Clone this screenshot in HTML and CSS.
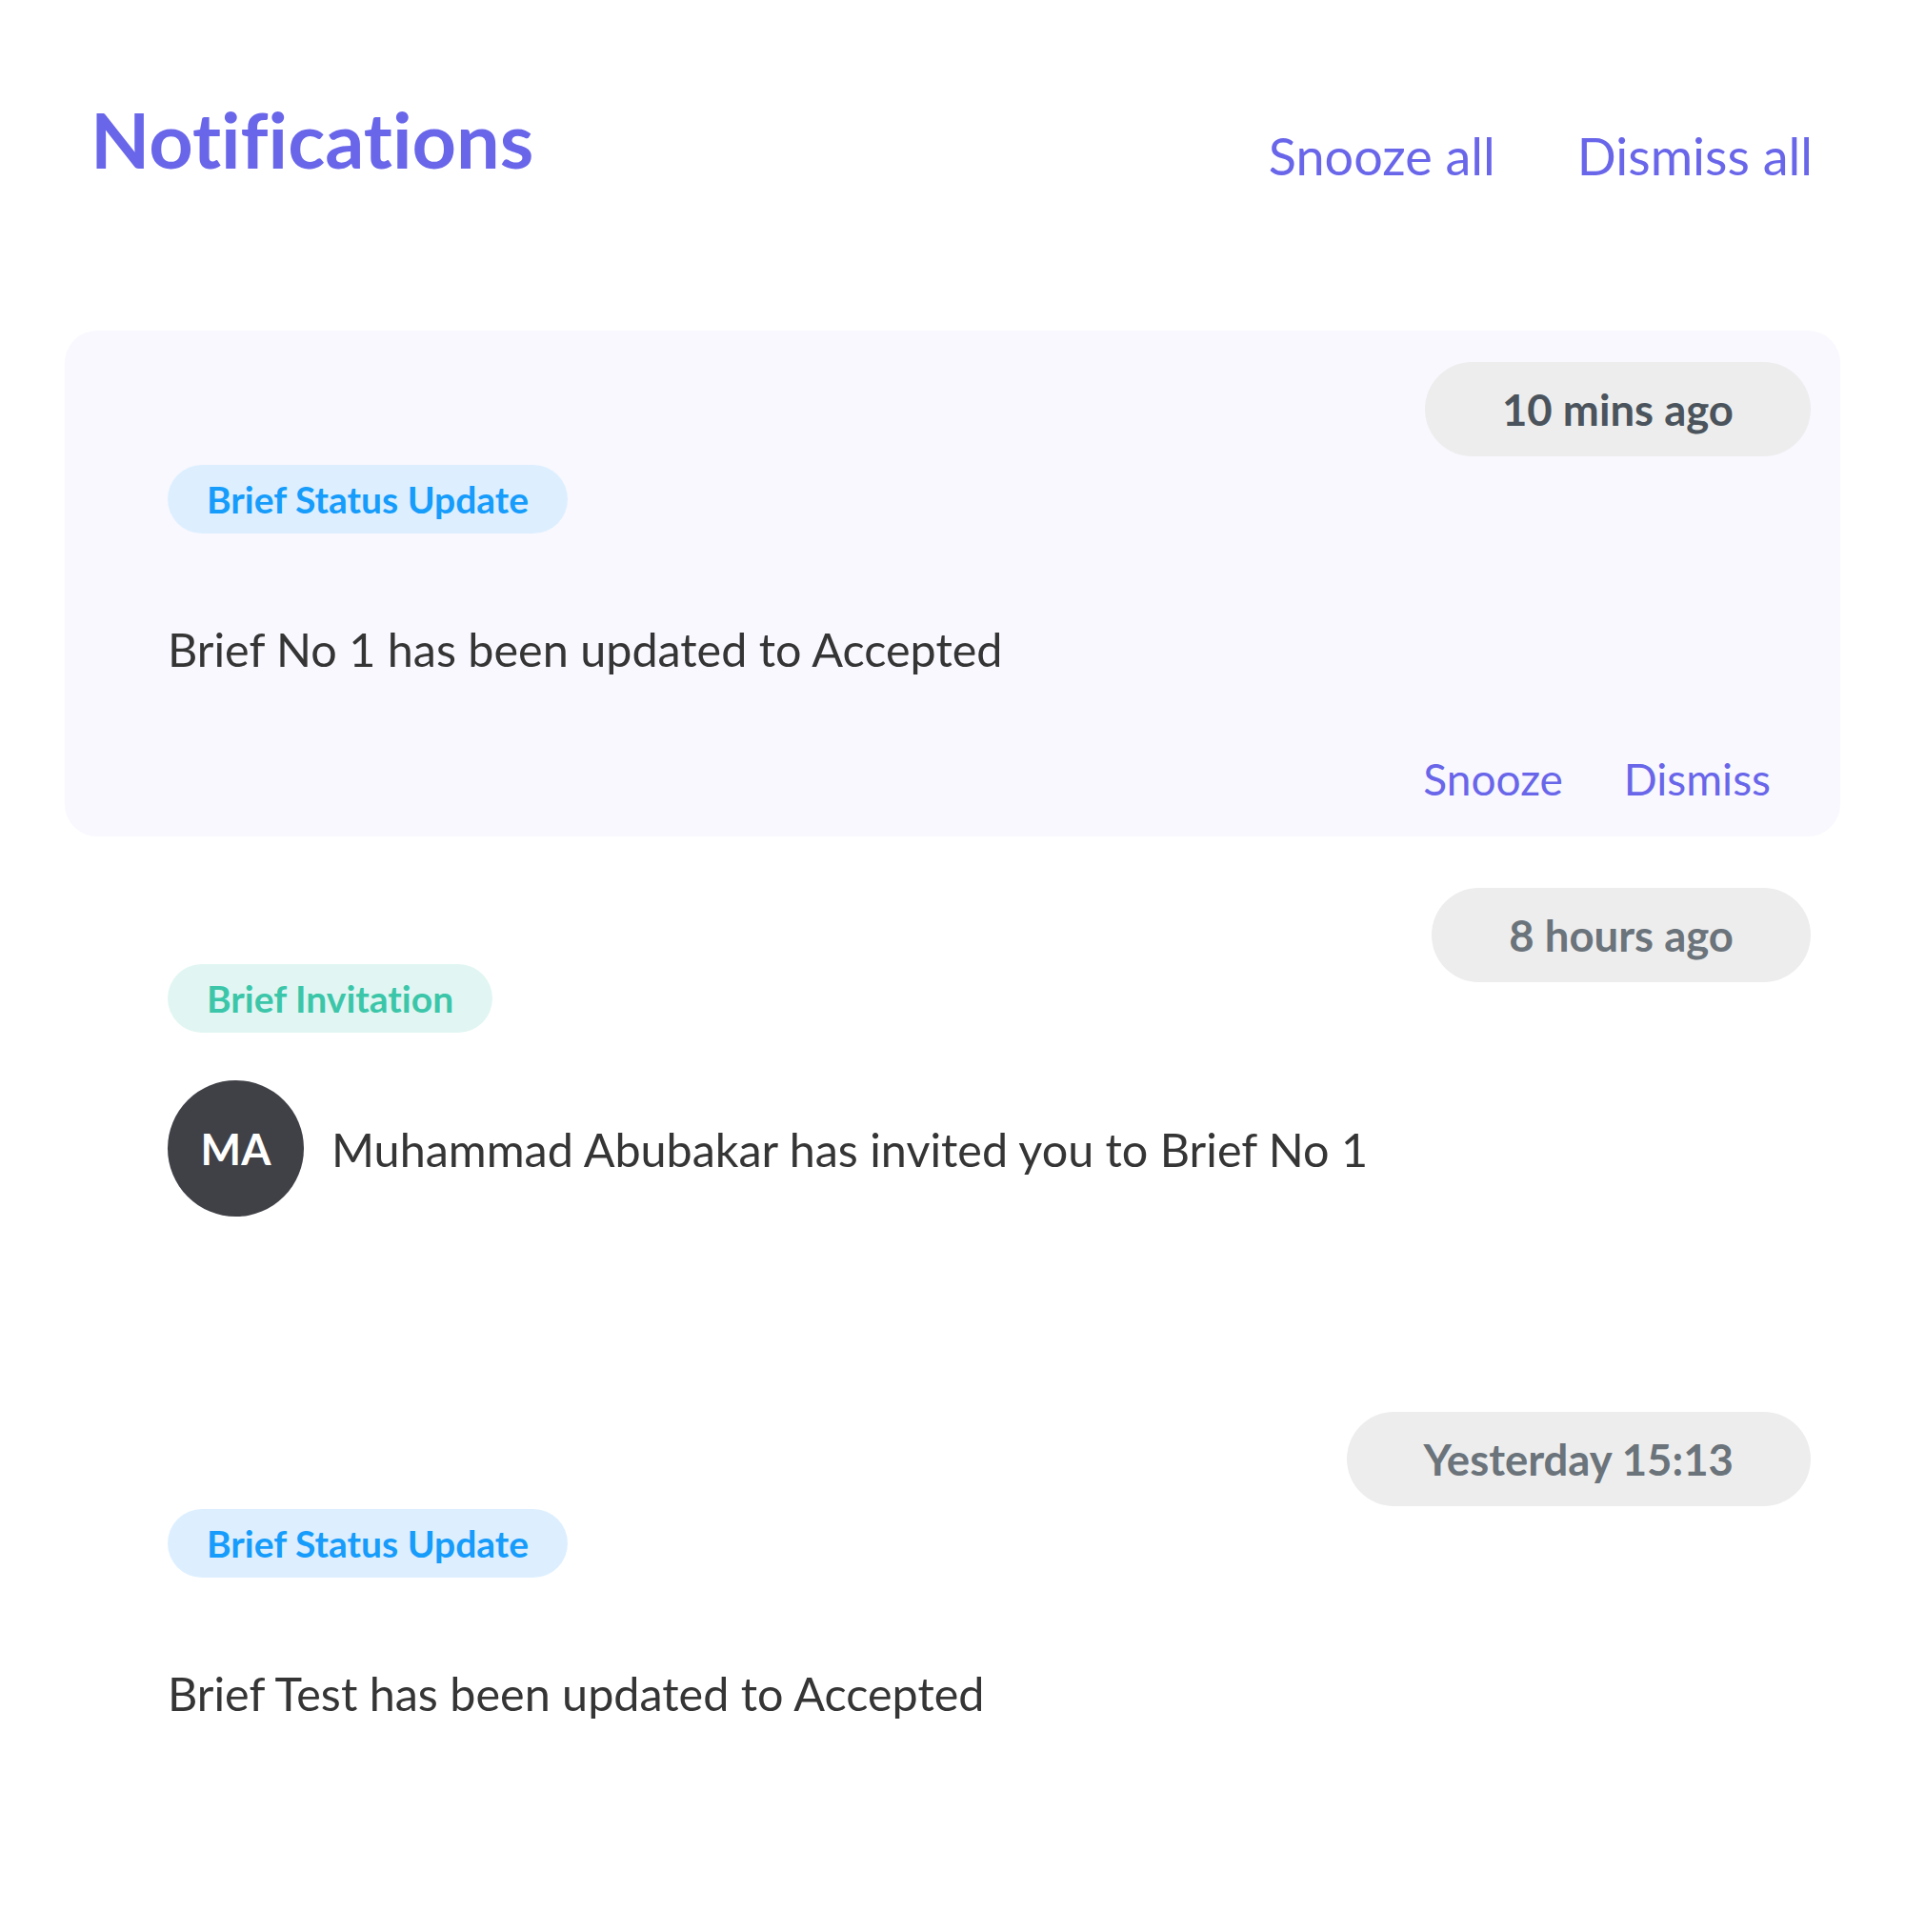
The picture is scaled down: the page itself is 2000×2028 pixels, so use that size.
FILE: index.html
```html
<!DOCTYPE html>
<html lang="en">
<head>
<meta charset="utf-8">
<title>Notifications</title>
<link rel="stylesheet" href="styles.css">
</head>
<body>
<main class="page">
  <header class="page-head">
    <h1 class="title">Notifications</h1>
    <nav class="bulk-actions">
      <a class="link" href="#">Snooze all</a>
      <a class="link" href="#">Dismiss all</a>
    </nav>
  </header>

  <section class="list">
    <article class="item item--active">
      <div class="item-head">
        <span class="tag tag--status">Brief Status Update</span>
        <span class="time">10 mins ago</span>
      </div>
      <p class="msg">Brief No 1 has been updated to Accepted</p>
      <div class="item-actions">
        <a class="link" href="#">Snooze</a>
        <a class="link" href="#">Dismiss</a>
      </div>
    </article>

    <article class="item item--invite">
      <div class="item-head">
        <span class="tag tag--invite">Brief Invitation</span>
        <span class="time">8 hours ago</span>
      </div>
      <div class="msg-row">
        <span class="avatar">MA</span>
        <p class="msg msg--inline">Muhammad Abubakar has invited you to Brief No 1</p>
      </div>
      <div class="item-actions">
        <a class="link" href="#">Snooze</a>
        <a class="link" href="#">Dismiss</a>
      </div>
    </article>

    <article class="item">
      <div class="item-head">
        <span class="tag tag--status">Brief Status Update</span>
        <span class="time">Yesterday 15:13</span>
      </div>
      <p class="msg">Brief Test has been updated to Accepted</p>
      <div class="item-actions">
        <a class="link" href="#">Snooze</a>
        <a class="link" href="#">Dismiss</a>
      </div>
    </article>
  </section>
</main>
</body>
</html>
```

FILE: styles.css
```css
* { box-sizing: border-box; }

html, body {
  margin: 0;
  padding: 0;
  background: #ffffff;
}

body {
  font-family: Lato, "Noto Sans", sans-serif;
  font-variant-ligatures: none;
  color: #353535;
}

.page {
  margin: 0 68px;
  padding-top: 99px;
}

.page-head {
  display: flex;
  justify-content: space-between;
  align-items: flex-start;
  padding: 0 29px 0 27px;
}

.title {
  margin: 0;
  font-size: 81px;
  line-height: 94px;
  font-weight: 700;
  color: #6966ea;
}

.bulk-actions {
  display: flex;
  gap: 86px;
  margin-top: 33px;
  font-size: 54px;
  line-height: 64px;
}

.link {
  color: #6966ea;
  text-decoration: none;
}

.list {
  margin-top: 151px;
  display: flex;
  flex-direction: column;
  gap: 21px;
}

.item {
  border-radius: 34px;
  padding: 33px 31px 33px 108px;
}

.item--active {
  background: #f8f8fe;
}

.item-head {
  display: flex;
  justify-content: space-between;
  align-items: flex-start;
}

.tag {
  display: inline-flex;
  align-items: center;
  height: 72px;
  padding: 0 41px;
  border-radius: 36px;
  font-size: 39px;
  font-weight: 700;
  margin-top: 102px;
}

.item--active .tag { margin-top: 108px; }
.item--invite .tag { margin-top: 80px; }

.tag--status {
  background: #ddefff;
  color: #169cfb;
}

.tag--invite {
  background: #e1f6f2;
  color: #3cc6a9;
}

.time {
  display: inline-flex;
  align-items: center;
  height: 99px;
  padding: 0 81px;
  border-radius: 50px;
  background: #ededed;
  color: #6b737b;
  font-size: 45.5px;
  font-weight: 700;
}

.item--active .time { color: #4b545c; }

.msg {
  margin: 85px 0 0;
  font-size: 48.5px;
  line-height: 72px;
  color: #353535;
}

.msg-row {
  display: flex;
  align-items: center;
  gap: 29px;
  margin-top: 50px;
}

.msg--inline { margin: 0; }

.avatar {
  flex: none;
  width: 143px;
  height: 143px;
  border-radius: 50%;
  background: #404147;
  color: #ffffff;
  display: flex;
  align-items: center;
  justify-content: center;
  font-size: 45px;
  font-weight: 700;
}

.item-actions {
  display: flex;
  justify-content: flex-end;
  gap: 64px;
  margin-top: 73px;
  padding-right: 42px;
  font-size: 46px;
  line-height: 55px;
}

.item:not(.item--active) .item-actions { visibility: hidden; }

.item--invite .item-actions { margin-top: 63px; }
```
